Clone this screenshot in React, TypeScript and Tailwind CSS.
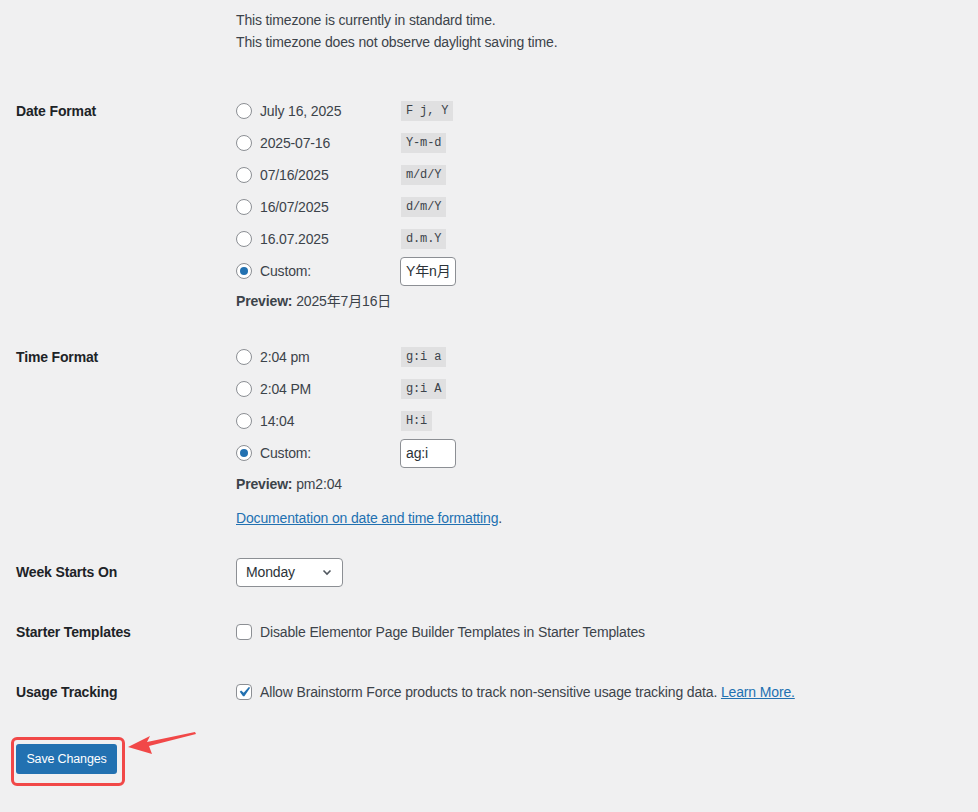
import { useState } from "react";

const FONT = { fontFamily: '"Liberation Sans", "Noto Sans CJK SC", sans-serif' };

const DATE_OPTIONS = [
  { label: "July 16, 2025", code: "F j, Y" },
  { label: "2025-07-16", code: "Y-m-d" },
  { label: "07/16/2025", code: "m/d/Y" },
  { label: "16/07/2025", code: "d/m/Y" },
  { label: "16.07.2025", code: "d.m.Y" },
];

const TIME_OPTIONS = [
  { label: "2:04 pm", code: "g:i a" },
  { label: "2:04 PM", code: "g:i A" },
  { label: "14:04", code: "H:i" },
];

const Radio = ({ checked }: { checked: boolean }) => (
  <span className="w-4 h-4 shrink-0 rounded-full border border-[#8c8f94] bg-white flex items-center justify-center">
    {checked && <span className="w-2 h-2 rounded-full bg-[#2271b1]" />}
  </span>
);

const Code = ({ children }: { children: string }) => (
  <code
    className="bg-[#e0e0e1] text-[#3c434a] text-[12px] leading-5 px-[5px] whitespace-pre"
    style={{ fontFamily: '"Liberation Mono", "DejaVu Sans Mono", monospace' }}
  >
    {children}
  </code>
);

const Checkbox = ({ checked }: { checked: boolean }) => (
  <span className="relative w-4 h-4 shrink-0 rounded-[4px] border border-[#8c8f94] bg-white">
    {checked && (
      <svg className="absolute left-[-3px] top-[-3px] w-5 h-5" viewBox="0 0 20 20" fill="#2271b1">
        <path d="M14.83 4.89l1.34.94-5.81 8.38H9.02L5.78 9.67l1.34-1.25 2.57 2.4z" />
      </svg>
    )}
  </span>
);

const FormatGroup = ({
  options,
  customValue,
}: {
  options: { label: string; code: string }[];
  customValue: string;
}) => {
  const [selected, setSelected] = useState(-1);
  return (
    <div>
      {options.map((o, i) => (
        <div key={o.code} className="h-8 flex items-center" onClick={() => setSelected(i)}>
          <div className="w-[165px] flex items-center gap-2">
            <Radio checked={selected === i} />
            <span>{o.label}</span>
          </div>
          <Code>{o.code}</Code>
        </div>
      ))}
      <div className="h-8 flex items-center" onClick={() => setSelected(-1)}>
        <div className="w-[164px] flex items-center gap-2">
          <Radio checked={selected === -1} />
          <span>Custom:</span>
        </div>
        <div className="h-[29px] w-14 bg-white border border-[#8c8f94] rounded-[4px] flex items-center px-[5px] whitespace-nowrap overflow-hidden text-[#2c3338]">
          {customValue}
        </div>
      </div>
    </div>
  );
};

export default function App() {
  return (
    <div
      className="min-h-[812px] bg-[#f0f0f1] text-[14px] tracking-[-0.15px] text-[#3c434a] relative"
      style={FONT}
    >
      {/* timezone notes */}
      <div className="pl-[236px] pt-[9px] leading-[22px]">
        <p>This timezone is currently in standard time.</p>
        <p>This timezone does not observe daylight saving time.</p>
      </div>

      {/* Date Format */}
      <div className="flex mt-[42px]">
        <div className="w-[236px] pl-4 h-8 flex items-center font-semibold text-[#1d2327]">Date Format</div>
        <div>
          <FormatGroup options={DATE_OPTIONS} customValue="Y年n月" />
          <p className="mt-[3px] leading-[22px]">
            <span className="font-semibold">Preview:</span> 2025年7月16日
          </p>
        </div>
      </div>

      {/* Time Format */}
      <div className="flex mt-[29px]">
        <div className="w-[236px] pl-4 h-8 flex items-center font-semibold text-[#1d2327]">Time Format</div>
        <div>
          <FormatGroup options={TIME_OPTIONS} customValue="ag:i" />
          <p className="mt-1 leading-[22px]">
            <span className="font-semibold">Preview:</span> pm2:04
          </p>
          <p className="mt-3 leading-[22px]">
            <a href="#" className="text-[#2271b1] underline">
              Documentation on date and time formatting
            </a>
            .
          </p>
        </div>
      </div>

      {/* Week Starts On */}
      <div className="flex items-center h-[60px] mt-[13px]">
        <div className="w-[236px] pl-4 font-semibold text-[#1d2327]">Week Starts On</div>
        <div className="h-[29px] w-[107px] bg-white border border-[#8c8f94] rounded-[4px] flex items-center justify-between pl-[9px] pr-[9px] text-[#2c3338]">
          <span>Monday</span>
          <svg className="w-3 h-3" viewBox="0 0 12 12" fill="none" stroke="#50575e" strokeWidth={1.6}>
            <path d="M2.5 4.5L6 8l3.5-3.5" />
          </svg>
        </div>
      </div>

      {/* Starter Templates */}
      <div className="flex items-center h-[60px]">
        <div className="w-[236px] pl-4 font-semibold text-[#1d2327]">Starter Templates</div>
        <label className="flex items-center gap-2">
          <Checkbox checked={false} />
          <span>Disable Elementor Page Builder Templates in Starter Templates</span>
        </label>
      </div>

      {/* Usage Tracking */}
      <div className="flex items-center h-[60px]">
        <div className="w-[236px] pl-4 font-semibold text-[#1d2327]">Usage Tracking</div>
        <label className="flex items-center gap-2">
          <Checkbox checked />
          <span>
            Allow Brainstorm Force products to track non-sensitive usage tracking data.{" "}
            <a href="#" className="text-[#2271b1] underline">
              Learn More.
            </a>
          </span>
        </label>
      </div>

      {/* Save */}
      <div className="pl-4 mt-[22px] relative">
        <button className="h-[30px] w-[101px] bg-[#2271b1] text-white text-[12.5px] rounded-[3px]">
          Save Changes
        </button>
        <div className="absolute left-[11px] top-[-7px] w-[114px] h-[49px] border-[3px] border-[#f14848] rounded-[6px] pointer-events-none" />
        <svg className="absolute left-[126px] top-[-14px]" width="72" height="30" viewBox="0 0 72 30">
          <path d="M2 17 L24 6 L21 12 L69 2 L70 4 L23 16 L26 24 Z" fill="#f14848" />
        </svg>
      </div>
    </div>
  );
}
